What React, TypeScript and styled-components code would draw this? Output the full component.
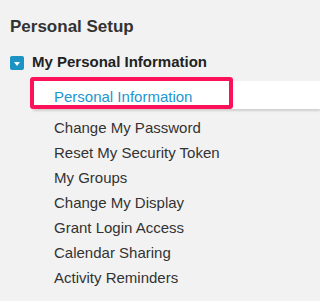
import React from 'react'

import styled, { createGlobalStyle } from 'styled-components'

const GlobalStyle = createGlobalStyle`
  html, body {
    margin: 0;
    background-color: #f2f2f2;
  }
`

const SetupPanel = styled.div`
  padding: 17px 0 0 10px;
  font-family: 'Liberation Sans', Arial, sans-serif;
  color: #333;
`

const SetupTitle = styled.h2`
  margin: 0;
  font-size: 17px;
  line-height: 20px;
  font-weight: bold;
  color: #333;
`

const Section = styled.div`
  margin-top: 15px;
`

const SectionHeader = styled.div`
  display: flex;
  align-items: center;
  gap: 8px;
  font-size: 15px;
  line-height: 20px;
  font-weight: bold;
  color: #222;
`

const ToggleIcon = styled.span`
  display: flex;
  justify-content: center;
  align-items: center;
  width: 14px;
  height: 14px;
  margin-top: 2px;
  border-radius: 2px;
  background-color: #1b93c3;

  &::after {
    content: '';
    border-left: 3.5px solid transparent;
    border-right: 3.5px solid transparent;
    border-top: 4px solid white;
    margin-top: 1px;
  }
`

const SectionList = styled.ul`
  list-style: none;
  margin: 9px 0 0 23px;
  padding: 0;
`

const SectionItem = styled.li<{ $active?: boolean }>`
  position: relative;
  padding: ${p => (p.$active ? '3px 0 0 21px' : '0 0 0 21px')};
  height: ${p => (p.$active ? '28px' : '25px')};
  margin-bottom: ${p => (p.$active ? '6px' : '0')};
  box-sizing: border-box;
  font-size: 15px;
  line-height: 25px;
  white-space: nowrap;
  color: ${p => (p.$active ? '#2196cf' : '#333')};
  background-color: ${p => (p.$active ? 'white' : 'transparent')};
  box-shadow: ${p => (p.$active ? '0 2px 2px rgba(0,0,0,.14)' : 'none')};
`

// annotation box drawn over the active row
const Highlight = styled.span`
  position: absolute;
  left: -3px;
  top: -4px;
  width: 203px;
  height: 32px;
  box-sizing: border-box;
  border: 4px solid #fd1259;
  border-radius: 3px;
`

const items = [
  'Change My Password',
  'Reset My Security Token',
  'My Groups',
  'Change My Display',
  'Grant Login Access',
  'Calendar Sharing',
  'Activity Reminders',
]

export default function App(): JSX.Element {
  return (
    <>
      <GlobalStyle />
      <SetupPanel>
        <SetupTitle>Personal Setup</SetupTitle>
        <Section>
          <SectionHeader>
            <ToggleIcon />
            My Personal Information
          </SectionHeader>
          <SectionList>
            <SectionItem $active>
              Personal Information
              <Highlight />
            </SectionItem>
            {items.map(item => (
              <SectionItem key={item}>{item}</SectionItem>
            ))}
          </SectionList>
        </Section>
      </SetupPanel>
    </>
  )
}
